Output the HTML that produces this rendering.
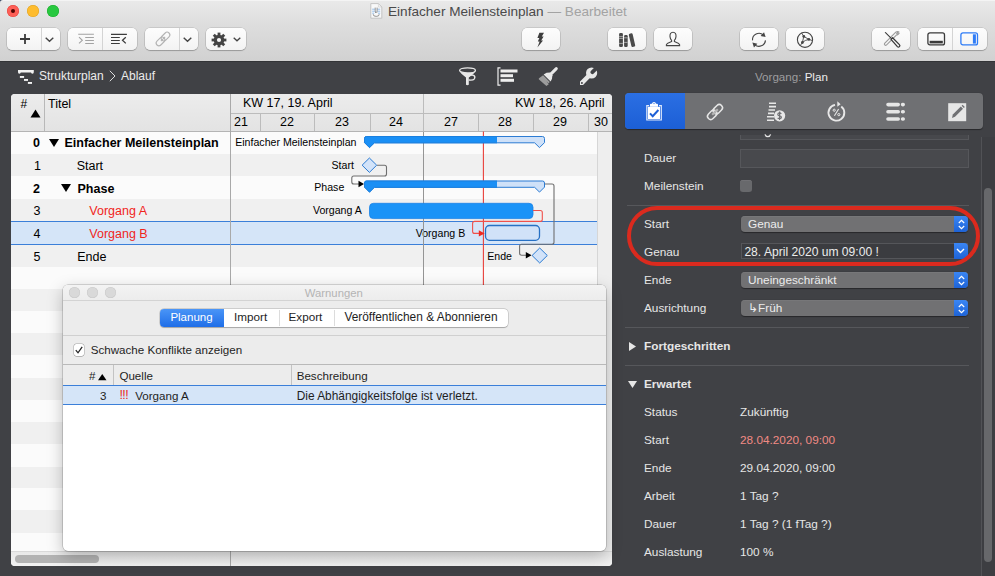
<!DOCTYPE html>
<html><head><meta charset="utf-8">
<style>
*{margin:0;padding:0;box-sizing:border-box}
html,body{width:995px;height:576px;overflow:hidden}
body{position:relative;background:#404145;font-family:"Liberation Sans",sans-serif;color:#000}
.a{position:absolute}
.t{position:absolute;white-space:nowrap;line-height:1}
svg{position:absolute;overflow:visible}
/* toolbar */
#tb{left:0;top:0;width:995px;height:60.5px;background:linear-gradient(#e9e9e9 0px,#dedede 22px,#d1d1d1 60px);border-top:1px solid #f4f4f4;border-radius:3px 0 0 0}
#tbline{left:0;top:60.5px;width:995px;height:1.5px;background:#333437}
.btn{position:absolute;top:28px;height:22px;background:linear-gradient(#fdfdfd,#f3f3f3);border-radius:5px;box-shadow:0 0 0 0.5px rgba(0,0,0,0.18),0 1px 1px rgba(0,0,0,0.2)}
.div{position:absolute;top:0;width:1px;height:22px;background:#d4d4d4}
.tl{position:absolute;width:12px;height:12px;border-radius:50%}
/* table */
#tbl{left:11px;top:94px;width:601px;height:472px;background:#fbfbfb;border-radius:4px;overflow:hidden}
.row{position:absolute;left:0;width:586px;height:22.3px}
.g{background:#f0f0f0}
.cell{position:absolute;font-size:12.5px;line-height:1;white-space:nowrap}
.gl{position:absolute;font-size:10.6px;line-height:1;white-space:nowrap}
/* inspector */
.lbl{position:absolute;margin-top:1px;left:644px;font-size:11.8px;color:#e6e6e6;white-space:nowrap;line-height:1}
.val{position:absolute;left:740px;font-size:12px;color:#e6e6e6;white-space:nowrap;line-height:1}
.pop{position:absolute;left:741px;width:227px;height:16px;border-radius:4px;background:#717173;box-shadow:inset 0 0.5px 0 #7e7e80,0 0.5px 1px rgba(0,0,0,0.4)}
.pop .st{position:absolute;right:0;top:0;width:14px;height:16px;border-radius:0 4px 4px 0;background:linear-gradient(#3a86f4,#1e63d6)}

.pop .tx{position:absolute;left:7px;top:2.8px;font-size:11.8px;color:#ececec;white-space:nowrap;line-height:1}
/* dialog */
#dlg{left:63px;top:285px;width:543px;height:266px;background:#fff;border-radius:5px;box-shadow:0 0 0 0.5px rgba(0,0,0,0.28),0 5px 16px rgba(0,0,0,0.25);overflow:hidden}
.dt{position:absolute;font-size:11.6px;line-height:1;white-space:nowrap;color:#1e1e1e}
</style></head><body>

<!-- ============ TOOLBAR ============ -->
<div class="a" style="left:0;top:0;width:4px;height:4px;background:#34455f"></div>
<div id="tb" class="a"></div>
<div id="tbline" class="a"></div>

<div class="tl" style="left:7px;top:5px;background:#fe5f57;box-shadow:inset 0 0 0 0.5px #e1453f"></div>
<div class="a" style="left:11px;top:9px;width:4px;height:4px;border-radius:50%;background:#4d0502"></div>
<div class="tl" style="left:27px;top:5px;background:#febc2e;box-shadow:inset 0 0 0 0.5px #dea123"></div>
<div class="tl" style="left:47px;top:5px;background:#28c840;box-shadow:inset 0 0 0 0.5px #1aab29"></div>

<!-- title -->
<svg style="left:370px;top:3px" width="13" height="16" viewBox="0 0 13 16"><path d="M0.8 0.6 H8.4 L11.8 4 V15.2 H0.8 Z" fill="#f9f9f9" stroke="#b9b9b9" stroke-width="0.8"/><path d="M8.4 0.6 V4 H11.8" fill="none" stroke="#c9c9c9" stroke-width="0.6"/><path d="M2.2 6.2 H4.8 M7.4 6.2 H10.2 M2.2 8.2 H4.8 M7.4 8.2 H10.2 M2.2 10.2 H4.2 M8 10.2 H10.2" stroke="#6aa6e6" stroke-width="0.7"/><path d="M5.2 4.6 V7.8 L5.6 10 M7.1 4.6 V7.8 L6.7 10 M3.2 11.2 Q3 13.4 6.2 13.4 Q9.4 13.4 9.2 11.2" fill="none" stroke="#6a6a6a" stroke-width="0.7"/></svg>
<div class="t" style="left:388px;top:5px;font-size:13.6px;color:#4a4a4a">Einfacher Meilensteinplan <span style="color:#a3a3a3">— Bearbeitet</span></div>

<!-- left buttons -->
<div class="btn" style="left:7px;width:53px"><div class="div" style="left:34.2px"></div></div>
<svg style="left:19px;top:33px" width="12" height="12" viewBox="0 0 12 12"><path d="M6 1 V11 M1 6 H11" stroke="#3a3a3a" stroke-width="1.8"/></svg>
<svg style="left:45px;top:37px" width="9" height="5" viewBox="0 0 9 5"><path d="M0.7 0.7 L4.5 4.2 L8.3 0.7" stroke="#444" stroke-width="1.4" fill="none"/></svg>

<div class="btn" style="left:68px;width:69px"><div class="div" style="left:34px"></div></div>
<svg style="left:70px;top:28px" width="65" height="22" viewBox="0 0 65 22"><g stroke="#a3a3a3" stroke-width="1.1" fill="none"><path d="M8.2 6.3 H23.9 M15.2 9.5 H23.9 M15.2 12.5 H23.9 M15.2 15.5 H23.9"/><path d="M9 9.2 L12.3 12.3 L9 15.4"/></g><g stroke="#3c3c3c" stroke-width="1.2" fill="none"><path d="M41 6.3 H56.9 M41 9.5 H49.8 M41 12.5 H49.8 M41 15.5 H49.8"/><path d="M55.8 9.2 L52.5 12.3 L55.8 15.4" stroke-width="1.3"/></g></svg>

<div class="btn" style="left:145px;width:53px"><div class="div" style="left:34px"></div></div>
<svg style="left:155px;top:31px" width="16" height="16" viewBox="0 0 16 16"><g transform="rotate(-45 8 8)" fill="none" stroke="#b3b3b3" stroke-width="1.1"><rect x="-0.5" y="5.3" width="10" height="5.4" rx="2.7"/><rect x="6.5" y="5.3" width="10" height="5.4" rx="2.7"/><path d="M5 8 H11"/></g></svg>
<svg style="left:183px;top:37px" width="9" height="5" viewBox="0 0 9 5"><path d="M0.7 0.7 L4.5 4.2 L8.3 0.7" stroke="#444" stroke-width="1.4" fill="none"/></svg>

<div class="btn" style="left:206px;width:40px"></div>
<svg style="left:211px;top:32px" width="16" height="16" viewBox="0 0 16 16"><g fill="#444"><rect x="6.6" y="0.6" width="2.8" height="4" transform="rotate(0 8 8)"/><rect x="6.6" y="0.6" width="2.8" height="4" transform="rotate(45 8 8)"/><rect x="6.6" y="0.6" width="2.8" height="4" transform="rotate(90 8 8)"/><rect x="6.6" y="0.6" width="2.8" height="4" transform="rotate(135 8 8)"/><rect x="6.6" y="0.6" width="2.8" height="4" transform="rotate(180 8 8)"/><rect x="6.6" y="0.6" width="2.8" height="4" transform="rotate(225 8 8)"/><rect x="6.6" y="0.6" width="2.8" height="4" transform="rotate(270 8 8)"/><rect x="6.6" y="0.6" width="2.8" height="4" transform="rotate(315 8 8)"/><circle cx="8" cy="8" r="5.3"/></g><circle cx="8" cy="8" r="2.1" fill="#f7f7f7"/></svg>
<svg style="left:233px;top:37px" width="8" height="5" viewBox="0 0 8 5"><path d="M0.7 0.7 L4 3.8 L7.3 0.7" stroke="#444" stroke-width="1.3" fill="none"/></svg>

<!-- middle buttons -->
<div class="btn" style="left:522px;width:38px"></div>
<svg style="left:535px;top:32px" width="11" height="16" viewBox="0 0 11 16"><path d="M4.4 0.8 H9 L6.8 4.6 H8.6 L6.2 8.4 H8 L2.4 15.4 L4.6 9.6 H2.8 L4.4 6 H2.4 Z" fill="#3d3d3d"/></svg>

<div class="btn" style="left:608px;width:38px"></div>
<svg style="left:616px;top:31px" width="22" height="18" viewBox="0 0 22 18"><g fill="#4a4a4a"><rect x="3.1" y="2" width="3.8" height="13.9" rx="1.2"/><rect x="8.1" y="4" width="3.6" height="11.9" rx="1.2"/><rect x="15.6" y="2.2" width="3.9" height="13.6" rx="1.2" transform="rotate(-13 17.5 15.8)"/></g><path d="M3.1 5.6 H6.9 M3.1 7.4 H6.9 M3.1 12.4 H6.9 M8.1 6.8 H11.7 M8.1 11.4 H11.7" stroke="#bdbdbd" stroke-width="0.8"/></svg>

<div class="btn" style="left:654px;width:38px"></div>
<svg style="left:665px;top:31px" width="16" height="16" viewBox="0 0 16 16"><path d="M8 1.2 C5.6 1.2 4.8 3.2 5 5.6 C5.2 7.6 6 8.8 6.6 9.4 V10.6 C5 11.4 2 11.8 1.4 13.6 V14.6 H14.6 V13.6 C14 11.8 11 11.4 9.4 10.6 V9.4 C10 8.8 10.8 7.6 11 5.6 C11.2 3.2 10.4 1.2 8 1.2 Z" fill="none" stroke="#454545" stroke-width="1.1"/></svg>

<!-- right buttons -->
<div class="btn" style="left:740px;width:38px"></div>
<svg style="left:750px;top:31px" width="18" height="18" viewBox="0 0 18 18"><g fill="none" stroke="#454545" stroke-width="1.1"><path d="M2.52 9.37 A6.5 6.5 0 0 1 13.35 3.97"/><path d="M15.48 9.37 A6.5 6.5 0 0 1 4.65 13.63"/></g><path d="M15.62 6.02 L14.04 1.16 L10.63 4.95 Z M2.38 11.58 L3.96 16.44 L7.37 12.65 Z" fill="#454545"/></svg>

<div class="btn" style="left:786px;width:38px"></div>
<svg style="left:796px;top:31px" width="18" height="18" viewBox="0 0 18 18"><circle cx="9" cy="8.8" r="7.6" fill="none" stroke="#454545" stroke-width="1.1"/><g stroke="#454545" stroke-width="0.9" fill="none"><path d="M7.8 5.4 L6.4 11.5 M7.8 5.4 L12.8 8.4 M6.4 11.5 Q9 9 12.8 8.4"/><path d="M7.8 5.4 L5.5 1.8 M12.8 8.4 L16.5 9.6 M6.4 11.5 L4.2 14.6"/></g><g fill="#454545"><circle cx="7.8" cy="5.4" r="1.4"/><circle cx="12.8" cy="8.4" r="1.4"/><circle cx="6.4" cy="11.5" r="1.4"/></g></svg>

<div class="btn" style="left:872px;width:38px"></div>
<svg style="left:882px;top:31px" width="19" height="18" viewBox="0 0 19 18"><g fill="none" stroke="#9b9b9b" stroke-width="1.1"><path d="M14.6 3.9 L4.4 14.1 A1.3 1.3 0 0 1 2.6 12.3 L12.8 2.1"/><path d="M12.8 2.1 A3.6 3.6 0 0 1 16.5 0.8 L14.6 2.8 L15.5 3.7 L17.4 1.8 A3.6 3.6 0 0 1 14.6 3.9"/></g><path d="M2.6 1.6 L3.6 1 L10.4 7.8 L9.6 8.6 Z" fill="#3a3a3a"/><path d="M9 8.4 L10.6 6.8 L17.4 13.6 A1.4 1.4 0 0 1 15.4 15.6 Z" fill="#f5f5f5" stroke="#3a3a3a" stroke-width="1.3" stroke-linejoin="round"/></svg>

<div class="btn" style="left:918px;width:69px"><div class="div" style="left:34px"></div></div>
<svg style="left:927px;top:32px" width="19" height="14" viewBox="0 0 19 14"><rect x="0.9" y="0.9" width="16.6" height="12" rx="2" fill="none" stroke="#3a3a3a" stroke-width="1.3"/><rect x="2.6" y="8.8" width="13.2" height="2.6" fill="#3a3a3a"/></svg>
<svg style="left:960px;top:32px" width="19" height="14" viewBox="0 0 19 14"><rect x="0.9" y="0.9" width="16.6" height="12" rx="2" fill="none" stroke="#2f7cf6" stroke-width="1.3"/><rect x="12.9" y="2.3" width="3" height="9.3" fill="#2f7cf6"/></svg>


<!-- ============ BREADCRUMB ============ -->
<svg style="left:14px;top:66px" width="24" height="22" viewBox="0 0 24 22"><path d="M4 4 H19.8 V6 Q19.8 7.8 18.6 7.8 Q17.4 7.8 17 6.4 H6.8 Q6.4 7.8 5.2 7.8 Q4 7.8 4 6 Z" fill="#f2f2f2"/><rect x="5.9" y="10" width="4.2" height="1.9" fill="#f2f2f2"/><rect x="10" y="13" width="4" height="1.9" fill="#f2f2f2"/><rect x="13.9" y="16" width="4.1" height="1.9" fill="#f2f2f2"/></svg>
<div class="t" style="left:39px;top:70px;font-size:12px;color:#ececec">Strukturplan</div>
<svg style="left:109px;top:70px" width="7" height="12" viewBox="0 0 7 12"><path d="M0.8 0.8 L6 6 L0.8 11.2" stroke="#dcdcdc" stroke-width="1" fill="none"/></svg>
<div class="t" style="left:121px;top:70px;font-size:12px;color:#ececec">Ablauf</div>

<!-- funnel -->
<svg style="left:458px;top:66px" width="20" height="21" viewBox="0 0 20 21"><path d="M1.6 4.6 Q1.6 7 8 11.6 V18.8 Q9.4 19.6 10.8 18.8 V11.6 Q17.4 7 17.4 4.6 Z" fill="#e8e8e8"/><ellipse cx="9.5" cy="4.4" rx="7.9" ry="2.5" fill="#404145" stroke="#e8e8e8" stroke-width="1.3"/><path d="M10.8 10 Q13.2 8.4 15.6 9.4 Q17.6 10.6 16.4 12.8 Q15 14.6 10.8 14" fill="none" stroke="#e8e8e8" stroke-width="1.3"/></svg>
<!-- bars -->
<svg style="left:497px;top:67px" width="22" height="19" viewBox="0 0 22 19"><path d="M3.5 0.8 H1 V18.2 H3.5" stroke="#eee" stroke-width="1.2" fill="none"/><rect x="3.5" y="2.5" width="17" height="3" fill="#eee"/><rect x="3.5" y="7.2" width="12.5" height="3" fill="#eee"/><rect x="3.5" y="11.8" width="13.5" height="3" fill="#eee"/></svg>
<!-- brush -->
<svg style="left:535px;top:64px" width="65" height="25" viewBox="0 0 65 25"><path d="M21.3 4.6 L15.6 10.4" stroke="#e8e8e8" stroke-width="3" stroke-linecap="round"/><path d="M8.6 10.4 L11.6 8.8 L15.2 8.6 L17.4 11.2 L17 14.8 L15.6 17.6 Z" fill="#e8e8e8"/><path d="M8.1 11.2 L14.8 18 L13.6 19.2 L11.6 17.4 L13.8 20.2 L11.4 22 L4 15.6 Q3.4 15 4 14.2 Z" fill="#9c9c9c"/></svg>
<!-- wrench -->
<svg style="left:535px;top:64px" width="65" height="25" viewBox="0 0 65 25"><defs><mask id="wm"><rect x="0" y="0" width="65" height="25" fill="#fff"/><path d="M57.4 8.2 L62 3.6" stroke="#000" stroke-width="3.8" stroke-linecap="round"/></mask></defs><g mask="url(#wm)" fill="#e8e8e8"><circle cx="56.6" cy="9" r="5.6"/><path d="M56.6 9 L46.2 19.6" stroke="#e8e8e8" stroke-width="4.6" stroke-linecap="round"/></g><circle cx="46.9" cy="19" r="0.95" fill="#404145"/></svg>

<!-- ============ TABLE ============ -->
<div id="tbl" class="a">
 <div class="row g" style="top:59.70px;height:22.20px"></div>
 <div class="row g" style="top:104.80px;height:22.30px"></div>
 <div class="row g" style="top:150.50px;height:22.40px"></div>
 <div class="row g" style="top:195.00px;height:21.90px"></div>
 <div class="row g" style="top:238.90px;height:22.20px"></div>
 <div class="row g" style="top:283.50px;height:22.20px"></div>
 <div class="row g" style="top:327.80px;height:22.20px"></div>
 <div class="row g" style="top:372.50px;height:21.80px"></div>
 <div class="row g" style="top:416.40px;height:22.20px"></div>
 <div class="row" style="top:126.60px;height:24.40px;background:#d5e5f8;border-top:1px solid #3b7fd9;border-bottom:1px solid #3b7fd9"></div>
 <!-- header -->
 <div class="a" style="left:0;top:0;width:601px;height:38px;background:linear-gradient(#ececec,#e3e3e3);border-bottom:1px solid #b4b4b4"></div>
 <div class="a" style="left:33px;top:0;width:1px;height:37px;background:#b8b8b8"></div>
 <div class="a" style="left:219px;top:0;width:1px;height:471px;background:#a9a9a9"></div>
 <div class="a" style="left:220px;top:18.5px;width:381px;height:1px;background:#bcbcbc"></div>
 <div class="a" style="left:412.3px;top:0;width:1px;height:37px;background:#bcbcbc"></div>
 <div class="a" style="left:249px;top:19px;width:1px;height:18px;background:#bcbcbc"></div>
 <div class="a" style="left:303px;top:19px;width:1px;height:18px;background:#bcbcbc"></div>
 <div class="a" style="left:358.5px;top:19px;width:1px;height:18px;background:#bcbcbc"></div>
 <div class="a" style="left:467.3px;top:19px;width:1px;height:18px;background:#bcbcbc"></div>
 <div class="a" style="left:521.6px;top:19px;width:1px;height:18px;background:#bcbcbc"></div>
 <div class="a" style="left:577px;top:19px;width:1px;height:18px;background:#bcbcbc"></div>
 <div class="cell" style="left:9.6px;top:4px;font-size:12px">#</div>
 <svg style="left:19.3px;top:15.2px" width="11" height="9" viewBox="0 0 11 9"><path d="M5.5 0.5 L10.5 8.5 H0.5 Z" fill="#000"/></svg>
 <div class="cell" style="left:37px;top:4px">Titel</div>
 <div class="cell" style="left:232px;top:3px">KW 17, 19. April</div>
 <div class="cell" style="left:504px;top:3px">KW 18, 26. April</div>
 <div class="cell" style="left:223px;top:22px">21</div>
 <div class="cell" style="left:269px;top:22px">22</div>
 <div class="cell" style="left:324px;top:22px">23</div>
 <div class="cell" style="left:378px;top:22px">24</div>
 <div class="cell" style="left:433px;top:22px">27</div>
 <div class="cell" style="left:487px;top:22px">28</div>
 <div class="cell" style="left:542px;top:22px">29</div>
 <div class="cell" style="left:583px;top:22px">30</div>

 <div class="cell" style="left:22px;top:42.60px;font-weight:bold">0</div>
 <svg style="left:37.5px;top:45.00px" width="10" height="8" viewBox="0 0 10 8"><path d="M0 0 H10 L5 8 Z" fill="#000"/></svg>
 <div class="cell" style="left:53.5px;top:42.60px;font-weight:bold">Einfacher Meilensteinplan</div>
 <div class="cell" style="left:23px;top:65.80px">1</div>
 <div class="cell" style="left:65.7px;top:65.80px">Start</div>
 <div class="cell" style="left:22px;top:89.05px;font-weight:bold">2</div>
 <svg style="left:50.3px;top:89.75px" width="10" height="8" viewBox="0 0 10 8"><path d="M0 0 H10 L5 8 Z" fill="#000"/></svg>
 <div class="cell" style="left:66.5px;top:89.05px;font-weight:bold">Phase</div>
 <div class="cell" style="left:22.5px;top:110.95px">3</div>
 <div class="cell" style="left:78.3px;top:110.95px;color:#f0251c">Vorgang A</div>
 <div class="cell" style="left:22.5px;top:133.80px">4</div>
 <div class="cell" style="left:78.3px;top:133.80px;color:#f0251c">Vorgang B</div>
 <div class="cell" style="left:22.5px;top:156.70px">5</div>
 <div class="cell" style="left:66.2px;top:156.70px">Ende</div>
 <div class="gl" style="right:255.5px;top:43.40px">Einfacher Meilensteinplan</div>
 <div class="gl" style="right:258.1px;top:65.60px">Start</div>
 <div class="gl" style="right:267.7px;top:88.15px">Phase</div>
 <div class="gl" style="right:250.2px;top:110.75px">Vorgang A</div>
 <div class="gl" style="right:146.8px;top:133.60px">Vorgang B</div>
 <div class="gl" style="right:100.0px;top:156.50px">Ende</div>

 <svg style="left:-11px;top:-94px" width="995" height="576" viewBox="0 0 995 576">
  <defs><clipPath id="dk"><rect x="300" y="0" width="197" height="576"/></clipPath></defs>
  <path d="M423.5 132 V551" stroke="#959595" stroke-width="1"/>
  <path d="M483.4 131.5 V551" stroke="#e8403a" stroke-width="1.1"/>
  <!-- summary row0 -->
  <g>
   <path id="sum0" d="M364.5 138.5 Q364.5 136.5 366.5 136.5 H542.5 Q544.5 136.5 544.5 138.5 V142.6 L539.5 147.6 L534.6 142.8 H374.4 L369.5 147.6 L364.5 142.6 Z" fill="#cfe1f8" stroke="#2b7bd3" stroke-width="1"/>
   <path d="M364.5 138.5 Q364.5 136.5 366.5 136.5 H542.5 Q544.5 136.5 544.5 138.5 V142.6 L539.5 147.6 L534.6 142.8 H374.4 L369.5 147.6 L364.5 142.6 Z" fill="#1a8ff5" stroke="#1a80e0" stroke-width="1" clip-path="url(#dk)"/>
  </g>
  <g transform="translate(0,44.5)">
   <path d="M364.5 138.5 Q364.5 136.5 366.5 136.5 H542.5 Q544.5 136.5 544.5 138.5 V142.6 L539.5 147.6 L534.6 142.8 H374.4 L369.5 147.6 L364.5 142.6 Z" fill="#cfe1f8" stroke="#2b7bd3" stroke-width="1"/>
   <path d="M364.5 138.5 Q364.5 136.5 366.5 136.5 H542.5 Q544.5 136.5 544.5 138.5 V142.6 L539.5 147.6 L534.6 142.8 H374.4 L369.5 147.6 L364.5 142.6 Z" fill="#1a8ff5" stroke="#1a80e0" stroke-width="1" clip-path="url(#dk)"/>
  </g>
  <!-- milestone start -->
  <path d="M369.4 158 L376.7 165.2 L369.4 172.4 L362.1 165.2 Z" fill="#d2e3f9" stroke="#2b7bd3" stroke-width="1"/>
  <!-- Vorgang A -->
  <rect x="369.5" y="203.3" width="163.5" height="15.3" rx="4" fill="#1a93f7" stroke="#1a82e6" stroke-width="0.8"/>
  <!-- Vorgang B -->
  <rect x="485.5" y="225.5" width="54" height="14.8" rx="4" fill="#d1e2f8" stroke="#2670c4" stroke-width="1.3"/>
  <!-- milestone ende -->
  <path d="M539.7 248 L547.3 255.5 L539.7 263 L532.1 255.5 Z" fill="#d2e3f9" stroke="#2b7bd3" stroke-width="1"/>
  <!-- connectors -->
  <path d="M377 165.2 H384.5 Q386.5 165.2 386.5 167.2 V174 Q386.5 176 384.5 176 H353.8 Q351.8 176 351.8 178 V182 Q351.8 184 353.8 184 H359" fill="none" stroke="#6e6e6e" stroke-width="1.1"/>
  <path d="M358.5 180.8 L364 184 L358.5 187.2 Z" fill="#000"/>
  <path d="M545 184 H552 Q554 184 554 186 V242.2 Q554 244.2 552 244.2 H521.6 Q519.6 244.2 519.6 246.2 V253.2 Q519.6 255.2 521.6 255.2 H526" fill="none" stroke="#6e6e6e" stroke-width="1.1"/>
  <path d="M525.8 252 L531.6 255.2 L525.8 258.4 Z" fill="#000"/>
  <path d="M533 210.5 H540.3 Q542.3 210.5 542.3 212.5 V219.4 Q542.3 221.4 540.3 221.4 H474.6 Q472.6 221.4 472.6 223.4 V231.4 Q472.6 233.4 474.6 233.4 H479" fill="none" stroke="#f0504a" stroke-width="1.1"/>
  <path d="M478.8 230.2 L484.7 233.4 L478.8 236.6 Z" fill="#ee2a22"/>
 </svg>

 <!-- vertical scroller strip -->
 <div class="a" style="left:586px;top:38px;width:15px;height:419px;background:#eeeeee;border-left:1px solid #d6d6d6"></div>
 <!-- bottom scroller -->
 <div class="a" style="left:0;top:457px;width:601px;height:15px;background:linear-gradient(#e9e9e9,#f2f2f2);border-top:1px solid #d9d9d9"></div>
 <div class="a" style="left:219px;top:457px;width:1px;height:15px;background:#a9a9a9"></div>
 <div class="a" style="left:4px;top:461px;width:84px;height:7.5px;border-radius:4px;background:#b3b3b3"></div>
</div>



<!-- ============ DIALOG ============ -->
<div id="dlg" class="a">
 <div class="a" style="left:0;top:0;width:543px;height:50.4px;background:#ececec"></div>
 <div class="a" style="left:0;top:0;width:543px;height:15.6px;background:linear-gradient(#f3f3f3,#ececec)"></div>
 <div class="a" style="left:0;top:15.3px;width:543px;height:1px;background:#d3d3d3"></div>
 <div class="a" style="left:5.9px;top:2.1px;width:11px;height:11px;border-radius:50%;background:#d9d9d9;box-shadow:inset 0 0 0 0.5px #c9c9c9"></div>
 <div class="a" style="left:24.2px;top:2.1px;width:11px;height:11px;border-radius:50%;background:#d9d9d9;box-shadow:inset 0 0 0 0.5px #c9c9c9"></div>
 <div class="a" style="left:41.9px;top:2.1px;width:11px;height:11px;border-radius:50%;background:#d9d9d9;box-shadow:inset 0 0 0 0.5px #c9c9c9"></div>
 <div class="dt" style="left:241.8px;top:2.5px;font-size:11.3px;color:#b4b4b4">Warnungen</div>
 <!-- segmented -->
 <div class="a" style="left:97px;top:24px;width:348.2px;height:17.6px;border-radius:4px;background:#fff;box-shadow:0 0 0 0.5px rgba(0,0,0,0.22),0 0.5px 1px rgba(0,0,0,0.2)"></div>
 <div class="a" style="left:97px;top:24px;width:64px;height:17.6px;border-radius:4px 0 0 4px;background:linear-gradient(#4a95f7,#1f6ee8)"></div>
 <div class="a" style="left:215.7px;top:25px;width:1px;height:15.6px;background:#dcdcdc"></div>
 <div class="a" style="left:270.5px;top:25px;width:1px;height:15.6px;background:#dcdcdc"></div>
 <div class="dt" style="left:107.4px;top:27.4px;font-size:11.5px;color:#fff">Planung</div>
 <div class="dt" style="left:171px;top:26.1px;font-size:11.7px">Import</div>
 <div class="dt" style="left:225.5px;top:26.1px;font-size:11.7px">Export</div>
 <div class="dt" style="left:281.4px;top:26.6px;font-size:11.9px">Veröffentlichen &amp; Abonnieren</div>
 <div class="a" style="left:0;top:50.4px;width:543px;height:1px;background:#d0d0d0"></div>
 <div class="a" style="left:0;top:51.4px;width:543px;height:28px;background:#ececec"></div>
 <!-- checkbox -->
 <div class="a" style="left:10.5px;top:59.4px;width:10.9px;height:11.2px;border-radius:2.5px;background:#fff;box-shadow:0 0 0 0.5px rgba(0,0,0,0.3),0 0.5px 0.5px rgba(0,0,0,0.2)"></div>
 <svg style="left:12px;top:61.2px" width="8" height="8" viewBox="0 0 8 8"><path d="M0.8 4.2 L3 6.8 L7.2 0.8" fill="none" stroke="#262626" stroke-width="1.3"/></svg>
 <div class="dt" style="left:27.7px;top:58.8px;font-size:11.6px">Schwache Konflikte anzeigen</div>
 <!-- table header -->
 <div class="a" style="left:0;top:79.3px;width:543px;height:1px;background:#b9b9b9"></div>
 <div class="a" style="left:0;top:80.3px;width:543px;height:19.5px;background:#ececec"></div>
 <div class="a" style="left:50.3px;top:80.3px;width:1px;height:19.5px;background:#c3c3c3"></div>
 <div class="a" style="left:227.6px;top:80.3px;width:1px;height:19.5px;background:#c3c3c3"></div>
 <div class="dt" style="left:26px;top:84.8px;font-size:11.6px">#</div>
 <svg style="left:35.3px;top:88.8px" width="9" height="7" viewBox="0 0 9 7"><path d="M4.25 0 L8.5 6.3 H0 Z" fill="#000"/></svg>
 <div class="dt" style="left:56.4px;top:84.8px;font-size:11.6px">Quelle</div>
 <div class="dt" style="left:233.7px;top:84.8px;font-size:11.6px">Beschreibung</div>
 <!-- selected row -->
 <div class="a" style="left:0;top:99.6px;width:543px;height:20px;background:#d5e5f8;border-top:1.2px solid #3b7fd9;border-bottom:1.2px solid #3b7fd9"></div>
 <div class="dt" style="left:37px;top:105px;font-size:11.6px">3</div>
 <div class="dt" style="left:56.4px;top:104.4px;font-size:12.5px;color:#ef2b22;letter-spacing:-0.6px">!!!</div>
 <div class="dt" style="left:72.2px;top:105px;font-size:11.6px">Vorgang A</div>
 <div class="dt" style="left:233.7px;top:106px;font-size:11.9px">Die Abhängigkeitsfolge ist verletzt.</div>
</div>

<!-- ============ INSPECTOR ============ -->
<div class="t" style="left:755px;top:71.3px;font-size:11.6px;color:#9d9d9f">Vorgang: <span style="color:#ececec">Plan</span></div>
<!-- tab bar -->
<div class="a" style="left:625px;top:93px;width:358px;height:35.6px;border-radius:4px;background:#6f7073;box-shadow:0 0.5px 1px rgba(0,0,0,0.4)"></div>
<div class="a" style="left:625px;top:93px;width:60px;height:35.6px;border-radius:4px 0 0 4px;background:linear-gradient(#2b6fe3,#1c5fd6)"></div>
<!-- tab icons -->
<svg style="left:640px;top:98px" width="30" height="26" viewBox="0 0 30 26"><path d="M9 7.6 H6.8 V22 H21.3 V7.6 H19" fill="none" stroke="#dfe9fb" stroke-width="1.2"/><rect x="7.9" y="8.8" width="12.1" height="12.2" fill="#fff"/><path d="M9.9 8.8 V6.8 Q9.9 5.8 11 5.8 H12 Q12.2 4 14 4 Q15.8 4 16 5.8 H17 Q18 5.8 18 6.8 V8.8 Z" fill="#fff"/><circle cx="14" cy="5.6" r="0.7" fill="#2b6fe3"/><path d="M10 15.4 L12.7 18.2 L18.4 12" fill="none" stroke="#1c5fd6" stroke-width="2"/></svg>
<svg style="left:705px;top:102px" width="20" height="20" viewBox="0 0 20 20"><g transform="rotate(-45 10 10)"><rect x="0.8" y="6.8" width="10.5" height="6.4" rx="3.2" fill="none" stroke="#e6e6e6" stroke-width="1.5"/><rect x="8.7" y="6.8" width="10.5" height="6.4" rx="3.2" fill="none" stroke="#e6e6e6" stroke-width="1.5"/><rect x="6" y="8.9" width="8" height="2.2" fill="#b5b5b5"/></g></svg>
<svg style="left:766px;top:102px" width="20" height="20" viewBox="0 0 20 20"><path d="M3 1.2 H10 M3 4.6 H10 M2.5 8 H9 M2 11.4 H8 M1 14.8 H8 M1 18.2 H8" stroke="#e8e8e8" stroke-width="1.6"/><circle cx="13.6" cy="13.8" r="5.6" fill="#e8e8e8"/><path d="M15.3 11.8 Q14.6 10.9 13.5 10.9 Q11.8 10.9 11.8 12.4 Q11.8 13.5 13.6 13.8 Q15.4 14.1 15.4 15.3 Q15.4 16.7 13.6 16.7 Q12.4 16.7 11.7 15.8 M13.6 9.6 V18" fill="none" stroke="#6f7073" stroke-width="1.2"/></svg>
<svg style="left:822px;top:98px" width="30" height="26" viewBox="0 0 30 26"><path d="M19.26 8.47 A7.9 7.9 0 1 1 13.03 6.92" fill="none" stroke="#e8e8e8" stroke-width="1.9"/><path d="M15.3 3.2 L18.6 6.3 L15.3 8.8 Z" fill="#e8e8e8"/><g fill="none" stroke="#e8e8e8" stroke-width="1"><circle cx="12.2" cy="12.2" r="1.1"/><circle cx="16.8" cy="16.6" r="1.1"/></g><path d="M16.6 11 L12.4 17.8" stroke="#e8e8e8" stroke-width="1.1"/></svg>
<svg style="left:886px;top:102px" width="20" height="20" viewBox="0 0 20 20"><g stroke="#e6e6e6" stroke-width="3.6" stroke-linecap="round"><path d="M2 2.6 H12.2 M2 9.8 H12.2 M2 17 H12.2"/><path d="M16.6 2.6 H17.2 M16.6 9.8 H17.2 M16.6 17 H17.2"/></g></svg>
<svg style="left:948px;top:103px" width="19" height="19" viewBox="0 0 19 19"><rect x="0.2" y="0.2" width="18" height="18" fill="#e6e6e6"/><path d="M4 15 L4.8 11.6 L12.8 3.6 L15 5.8 L7 13.8 Z" fill="#6f7073"/><path d="M13.6 2.8 L14.6 1.8 L16.8 4 L15.8 5 Z" fill="#6f7073"/></svg>

<!-- scrollbar -->
<div class="a" style="left:980.5px;top:137px;width:1px;height:439px;background:#515256"></div>
<div class="a" style="left:981.5px;top:137px;width:13.5px;height:439px;background:#3d3e42"></div>
<div class="a" style="left:984px;top:187.6px;width:8.3px;height:374.6px;border-radius:4.2px;background:#67686b"></div>

<!-- fields -->
<div class="a" style="left:740px;top:134.8px;width:229px;height:5.2px;background:#47484c;border:1px solid #56575b;border-top:none"></div>
<svg style="left:764px;top:133px" width="8" height="5" viewBox="0 0 8 5"><path d="M1 1.4 Q1.6 3.6 3.8 3.6 Q6 3.6 6.6 1.4" fill="none" stroke="#e6e6e6" stroke-width="1.3"/></svg>
<div class="lbl" style="left:644px;top:152.04px;">Dauer</div>
<div class="a" style="left:740px;top:149.2px;width:229px;height:18.7px;background:#48494d;border:1px solid #56575b"></div>
<div class="lbl" style="left:644px;top:179.94px;">Meilenstein</div>
<div class="a" style="left:740px;top:179.8px;width:12.4px;height:12.6px;border-radius:3px;background:#68696c;box-shadow:inset 0 0.5px 0 #7a7b7e"></div>
<div class="a" style="left:627px;top:204.8px;width:342px;height:1px;background:#56575b"></div>
<div class="lbl" style="left:644px;top:218.14px;">Start</div>
<div class="pop" style="top:216.4px"><div class="tx">Genau</div><div class="st"><svg style="left:3.5px;top:2.5px" width="7" height="11" viewBox="0 0 7 11"><path d="M0.8 4 L3.5 1.3 L6.2 4 M0.8 7 L3.5 9.7 L6.2 7" fill="none" stroke="#fff" stroke-width="1.2"/></svg></div></div>
<div class="lbl" style="left:644px;top:246.24px;">Genau</div>
<div class="a" style="left:741px;top:243px;width:227px;height:16.3px;background:#3b3c40;border:1px solid #55565a"></div>
<div class="a" style="left:953.5px;top:243px;width:14.5px;height:16.3px;border-radius:0 4px 4px 0;background:linear-gradient(#3a86f4,#1e63d6)"></div>
<svg style="left:956px;top:248px" width="9" height="6" viewBox="0 0 9 6"><path d="M1 1 L4.5 4.5 L8 1" fill="none" stroke="#fff" stroke-width="1.4"/></svg>
<div class="t" style="left:744.4px;top:245.5px;font-size:12.1px;color:#ececec">28. April 2020 um 09:00 !</div>
<div class="lbl" style="left:644px;top:274.04px;">Ende</div>
<div class="pop" style="top:272.2px"><div class="tx">Uneingeschränkt</div><div class="st"><svg style="left:3.5px;top:2.5px" width="7" height="11" viewBox="0 0 7 11"><path d="M0.8 4 L3.5 1.3 L6.2 4 M0.8 7 L3.5 9.7 L6.2 7" fill="none" stroke="#fff" stroke-width="1.2"/></svg></div></div>
<div class="lbl" style="left:644px;top:301.84px;">Ausrichtung</div>
<div class="pop" style="top:300px"><div class="tx">↳Früh</div><div class="st"><svg style="left:3.5px;top:2.5px" width="7" height="11" viewBox="0 0 7 11"><path d="M0.8 4 L3.5 1.3 L6.2 4 M0.8 7 L3.5 9.7 L6.2 7" fill="none" stroke="#fff" stroke-width="1.2"/></svg></div></div>
<div class="a" style="left:626.7px;top:206.3px;width:353.3px;height:59.8px;border:4.6px solid #db2a1e;border-radius:30px"></div>
<div class="a" style="left:625px;top:327px;width:344px;height:1px;background:#56575b"></div>
<svg style="left:629px;top:342px" width="7" height="9" viewBox="0 0 7 9"><path d="M0 0 L7 4.5 L0 9 Z" fill="#e6e6e6"/></svg>
<div class="lbl" style="left:644px;top:340.34px;font-weight:bold">Fortgeschritten</div>
<div class="a" style="left:625px;top:365px;width:344px;height:1px;background:#56575b"></div>
<svg style="left:628px;top:381px" width="9" height="7" viewBox="0 0 9 7"><path d="M0 0 H9 L4.5 7 Z" fill="#e6e6e6"/></svg>
<div class="lbl" style="left:644px;top:378.34px;font-weight:bold">Erwartet</div>
<div class="lbl" style="left:644px;top:405.94px;">Status</div>
<div class="lbl" style="left:740px;top:405.94px;">Zukünftig</div>
<div class="lbl" style="left:644px;top:433.94px;">Start</div>
<div class="lbl" style="left:740px;top:433.94px;color:#f08a84">28.04.2020, 09:00</div>
<div class="lbl" style="left:644px;top:461.94px;">Ende</div>
<div class="lbl" style="left:740px;top:461.94px;">29.04.2020, 09:00</div>
<div class="lbl" style="left:644px;top:489.94px;">Arbeit</div>
<div class="lbl" style="left:740px;top:489.94px;">1 Tag ?</div>
<div class="lbl" style="left:644px;top:517.94px;">Dauer</div>
<div class="lbl" style="left:740px;top:517.94px;">1 Tag ? (1 fTag ?)</div>
<div class="lbl" style="left:644px;top:545.94px;">Auslastung</div>
<div class="lbl" style="left:740px;top:545.94px;">100 %</div>

</body></html>
